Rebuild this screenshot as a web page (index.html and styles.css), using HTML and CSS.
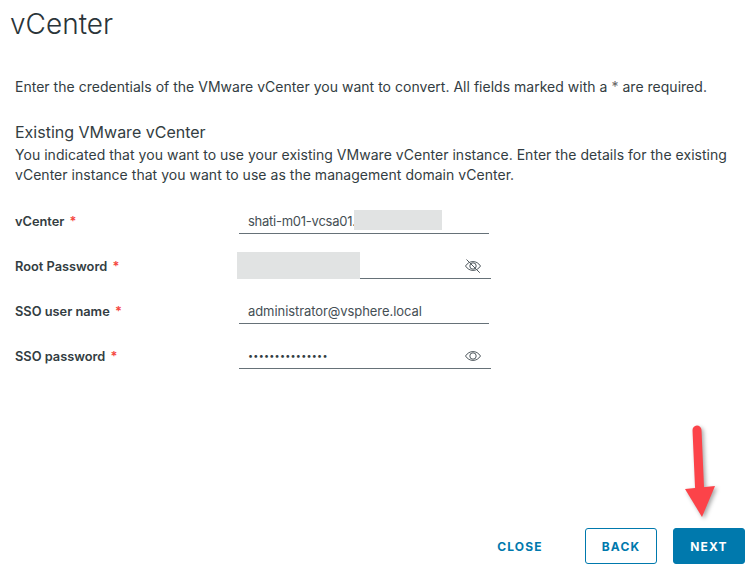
FILE: index.html
```html
<!DOCTYPE html>
<html lang="en">

<head>
  <meta charset="UTF-8">
  <title>vCenter</title>
  <link rel="stylesheet" href="styles.css">
</head>

<body>
  <div class="page">
    <h1>vCenter</h1>
    <p class="intro">Enter the credentials of the VMware vCenter you want to convert. All fields marked with a <span class="star">*</span> are required.</p>

    <h2>Existing VMware vCenter</h2>
    <p class="desc">You indicated that you want to use your existing VMware vCenter instance. Enter the details for the existing vCenter instance that you want to use as the management domain vCenter.</p>

    <form class="form">
      <div class="row">
        <label>vCenter <span class="req">*</span></label>
        <div class="field field-short">
          <span class="value value-host">shati-m01-vcsa01.</span>
          <span class="mask mask-host"></span>
        </div>
      </div>

      <div class="row">
        <label>Root Password <span class="req">*</span></label>
        <div class="field">
          <span class="value"></span>
          <span class="mask mask-pass"></span>
          <svg class="eye" width="18" height="18" viewBox="0 0 18 18">
            <path d="M1.500 9C3.500 6 6 4.600 9 4.600S14.500 6 16.500 9C14.500 12 12 13.400 9 13.400S3.500 12 1.500 9Z" />
            <circle cx="9" cy="9" r="3.200" />
            <path d="M2.500 2.500L15.800 15.800" />
          </svg>
        </div>
      </div>

      <div class="row">
        <label>SSO user name <span class="req">*</span></label>
        <div class="field field-short">
          <span class="value">administrator@vsphere.local</span>
        </div>
      </div>

      <div class="row">
        <label>SSO password <span class="req">*</span></label>
        <div class="field">
          <span class="value dots">•••••••••••••••</span>
          <svg class="eye" width="18" height="18" viewBox="0 0 18 18">
            <path d="M1.500 9C3.500 6 6 4.600 9 4.600S14.500 6 16.500 9C14.500 12 12 13.400 9 13.400S3.500 12 1.500 9Z" />
            <circle cx="9" cy="9" r="3.200" />
          </svg>
        </div>
      </div>
    </form>

    <div class="footer">
      <button type="button" class="btn btn-link">CLOSE</button>
      <button type="button" class="btn btn-outline">BACK</button>
      <button type="button" class="btn btn-primary">NEXT</button>
    </div>
  </div>

  <!-- red arrow drawn on top of the screenshot -->
  <svg class="arrow" width="50" height="100" viewBox="0 0 50 100">
    <path d="M12 6L14.500 63" stroke="#fc4349" stroke-width="9" stroke-linecap="round" fill="none" />
    <path d="M0 65L30 62L17 93Z" fill="#fc4349" />
  </svg>
</body>

</html>
```

FILE: styles.css
```css
body {
  font-family: 'Inter', 'Liberation Sans', sans-serif;
  background-color: #fff;
  color: #333d42;
  margin: 0;
  padding: 0;
}

.page {
  height: 575px;
  box-sizing: border-box;
  padding: 9px 6px 11px 15px;
  display: flex;
  flex-direction: column;
  overflow: hidden;
}

h1 {
  font-size: 28px;
  font-weight: 300;
  line-height: 30px;
  margin: 0 0 0 -5px;
  color: #2a3439;
}

.intro {
  font-size: 14px;
  letter-spacing: 0.020px;
  line-height: 20px;
  margin: 38px 0 0;
}

.star {
  color: #666;
}

h2 {
  font-size: 16px;
  font-weight: 400;
  line-height: 20px;
  margin: 25px 0 0;
}

.desc {
  font-size: 14px;
  letter-spacing: 0.030px;
  line-height: 20px;
  margin: 3px 0 0;
}

.form {
  margin-top: 14px;
}

.row {
  display: flex;
  align-items: center;
  height: 45px;
}

label {
  width: 224px;
  margin-bottom: 1px;
  font-size: 12.800px;
  font-weight: 600;
}

.req {
  color: #f5483f;
  margin-left: 2px;
}

.field {
  position: relative;
  width: 252px;
  height: 29px;
  margin-bottom: 4px;
  box-sizing: border-box;
  border-bottom: 1px solid #667178;
  display: flex;
  align-items: center;
  justify-content: space-between;
  padding: 3px 9px 0;
}

.field-short {
  width: 250px;
}

.value {
  font-size: 13px;
  letter-spacing: -0.070px;
  color: #454f55;
}

.value-host {
  letter-spacing: -0.250px;
}

.dots {
  font-size: 9px;
  letter-spacing: 0.250px;
  color: #333d42;
}

.mask {
  position: absolute;
  background-color: #e1e3e3;
}

.mask-host {
  left: 115px;
  top: 5px;
  width: 88px;
  height: 20px;
}

.mask-pass {
  left: -2px;
  top: 2px;
  width: 123px;
  height: 27px;
}

.eye {
  fill: none;
  stroke: #50595e;
  stroke-width: 1;
}

.footer {
  margin-top: auto;
  display: flex;
  justify-content: flex-end;
  gap: 16px;
}

.btn {
  font-family: inherit;
  font-size: 12px;
  font-weight: 700;
  letter-spacing: 1.200px;
  width: 72px;
  height: 36px;
  border-radius: 3px;
  padding: 0;
  cursor: pointer;
}

.btn-link {
  background: none;
  border: none;
  color: #0079ad;
  margin-right: 13px;
}

.btn-outline {
  background-color: #fff;
  border: 1px solid #0079ad;
  color: #0079ad;
}

.btn-primary {
  background-color: #0079ad;
  border: 1px solid #0079ad;
  color: #fff;
}

.arrow {
  position: absolute;
  left: 685px;
  top: 424px;
  filter: drop-shadow(2px 2px 2px rgba(0, 0, 0, 0.35));
}
```
